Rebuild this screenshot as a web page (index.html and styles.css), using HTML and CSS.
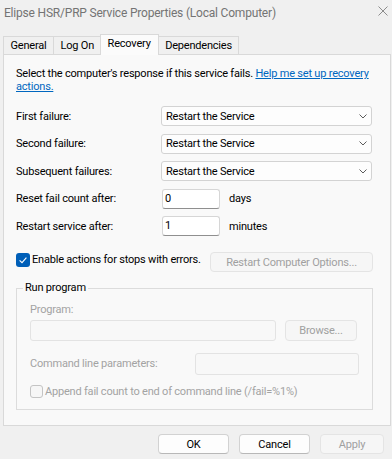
FILE: index.html
```html
<!DOCTYPE html>
<html lang="en">
<head>
<meta charset="utf-8">
<title>Elipse HSR/PRP Service Properties (Local Computer)</title>
<link rel="stylesheet" href="styles.css">
</head>
<body>
<div class="window">
  <header class="titlebar">
    <span class="title">Elipse HSR/PRP Service Properties (Local Computer)</span>
    <svg class="close" width="10" height="10" viewBox="0 0 10 10" aria-hidden="true"><path d="M0.5 0.5 L9.5 9.5 M9.5 0.5 L0.5 9.5" stroke="#8c8c8c" stroke-width="1" fill="none"/></svg>
  </header>
  <nav class="tabs">
    <div class="tab">General</div>
    <div class="tab">Log On</div>
    <div class="tab active">Recovery</div>
    <div class="tab">Dependencies</div>
  </nav>
  <section class="panel">
    <p class="intro">Select the computer's response if this service fails. <a class="link" href="#">Help me set up recovery<br>actions.</a></p>
    <div class="form">
      <span class="lbl">First failure:</span>
      <div class="select"><span>Restart the Service</span><svg width="8" height="5" viewBox="0 0 8 5"><path d="M0.5 0.5 L4 4 L7.5 0.5" stroke="#5c5c5c" stroke-width="1" fill="none"/></svg></div>
      <span class="lbl">Second failure:</span>
      <div class="select"><span>Restart the Service</span><svg width="8" height="5" viewBox="0 0 8 5"><path d="M0.5 0.5 L4 4 L7.5 0.5" stroke="#5c5c5c" stroke-width="1" fill="none"/></svg></div>
      <span class="lbl">Subsequent failures:</span>
      <div class="select"><span>Restart the Service</span><svg width="8" height="5" viewBox="0 0 8 5"><path d="M0.5 0.5 L4 4 L7.5 0.5" stroke="#5c5c5c" stroke-width="1" fill="none"/></svg></div>
      <span class="lbl">Reset fail count after:</span>
      <div class="with-unit"><div class="textbox num">0</div><span>days</span></div>
      <span class="lbl">Restart service after:</span>
      <div class="with-unit"><div class="textbox num">1</div><span>minutes</span></div>
    </div>
    <div class="errors-row">
      <div class="check"><span class="box checked"><svg width="14" height="14" viewBox="0 0 14 14"><path d="M3.6 7.3 L6 9.6 L10.4 4.6" stroke="#ffffff" stroke-width="1.1" fill="none"/></svg></span><span>Enable actions for stops with errors.</span></div>
      <button class="btn disabled restart">Restart Computer Options...</button>
    </div>
    <fieldset class="group">
      <legend>Run program</legend>
      <div class="dim">Program:</div>
      <div class="program-row"><div class="textbox disabled program"></div><button class="btn disabled browse">Browse...</button></div>
      <div class="params-row"><span class="dim">Command line parameters:</span><div class="textbox disabled params"></div></div>
      <div class="check append"><span class="box"></span><span class="dim">Append fail count to end of command line (/fail=%1%)</span></div>
    </fieldset>
  </section>
  <footer class="footer">
    <button class="btn">OK</button>
    <button class="btn">Cancel</button>
    <button class="btn disabled apply">Apply</button>
  </footer>
</div>
</body>
</html>
```
FILE: styles.css
```css
* { box-sizing: border-box; }
html, body { margin: 0; padding: 0; }
body {
  width: 392px;
  height: 459px;
  overflow: hidden;
  background: #f0f0f0;
  font-family: Roboto, "Liberation Sans", sans-serif;
  font-size: 11px;
  letter-spacing: -0.2px;
  color: #000;
}
.window { width: 392px; height: 459px; }

.titlebar {
  height: 34px;
  display: flex;
  justify-content: space-between;
  align-items: flex-start;
  padding: 0 4px 0 4px;
}
.title {
  font-size: 12px;
  letter-spacing: -0.2px;
  line-height: 26px;
  color: #747474;
}
.close { margin-top: 6px; }

.tabs {
  height: 20px;
  display: flex;
  align-items: flex-end;
  padding-left: 3px;
}
.tab {
  height: 18px;
  line-height: 17px;
  padding: 0 6.5px;
  border: 1px solid #d9d9d9;
  border-bottom: 0;
  background: #f0f0f0;
  margin-right: -1px;
}
.tab.active {
  height: 21px;
  line-height: 18px;
  padding: 0 7px;
  margin: 0 -1px -1px -1px;
  background: #fbfbfb;
  position: relative;
  z-index: 1;
}

.panel {
  margin-left: 3px;
  width: 388px;
  height: 372px;
  border: 1px solid #d9d9d9;
  background: #f9f9f9;
  padding: 12px 17px 0 12px;
}
.intro { margin: 0; line-height: 13px; }
.link { color: #0067c0; text-decoration: underline; }

.form {
  margin-top: 13px;
  display: grid;
  grid-template-columns: 145px 211px;
  grid-auto-rows: 20px;
  row-gap: 7.5px;
  align-items: center;
}
.select {
  height: 20px;
  display: flex;
  align-items: center;
  justify-content: space-between;
  padding: 0 4px 0 4px;
  border: 1px solid #d3d3d3;
  border-radius: 3px;
  background: #fdfdfd;
}
.with-unit {
  display: flex;
  align-items: center;
  gap: 9px;
  padding-left: 1px;
}
.textbox {
  height: 20px;
  background: #ffffff;
  border: 1px solid #d6d6d6;
  border-bottom-color: #8f8f8f;
  border-radius: 3px;
}
.textbox.num { width: 58px; padding-left: 2px; line-height: 18px; }
.textbox.disabled {
  background: #f8f8f8;
  border-color: #e3e3e3;
}

.errors-row {
  margin-top: 16px;
  display: flex;
  justify-content: space-between;
  align-items: flex-start;
}
.check {
  display: flex;
  align-items: flex-start;
  gap: 2px;
  line-height: 14px;
  padding-top: 1px;
}
.box {
  width: 14px;
  height: 14px;
  border: 1px solid #c4c4c4;
  border-radius: 3px;
  background: #f6f6f6;
  flex: none;
}
.box.checked {
  border: 0;
  background: #005fb8;
}
.box.checked svg { display: block; }

.btn {
  font: inherit;
  letter-spacing: inherit;
  height: 20px;
  padding: 0;
  color: #000;
  background: #fdfdfd;
  border: 1px solid #d2d2d2;
  border-bottom-color: #b8b8b8;
  border-radius: 4px;
  text-align: center;
}
.btn.disabled {
  color: #a0a0a0;
  background: #f6f6f6;
  border-color: #e4e4e4;
}
.restart { width: 163px; }

.group {
  margin: 9px 0 0 0;
  padding: 8px 13px 10px 13px;
  border: 1px solid #dcdcdc;
  border-radius: 0;
}
.group legend {
  margin-left: -7px;
  padding: 0 2px;
  line-height: 14px;
}
.dim { color: #a3a3a3; line-height: 14px; }
.program-row {
  margin-top: 3px;
  display: flex;
  gap: 9px;
}
.textbox.program { width: 246px; height: 21px; }
.browse { width: 72px; height: 21px; }
.params-row {
  margin-top: 12px;
  display: flex;
  align-items: center;
  justify-content: space-between;
}
.textbox.params { width: 164px; height: 22px; }
.check.append { margin-top: 10px; padding-top: 0; }
.check.append .box { width: 13px; height: 13px; }

.footer {
  padding: 8px 8px 0 0;
  display: flex;
  justify-content: flex-end;
  gap: 10px;
}
.footer .btn { width: 71px; }
.footer .btn.apply { width: 64px; }
```
